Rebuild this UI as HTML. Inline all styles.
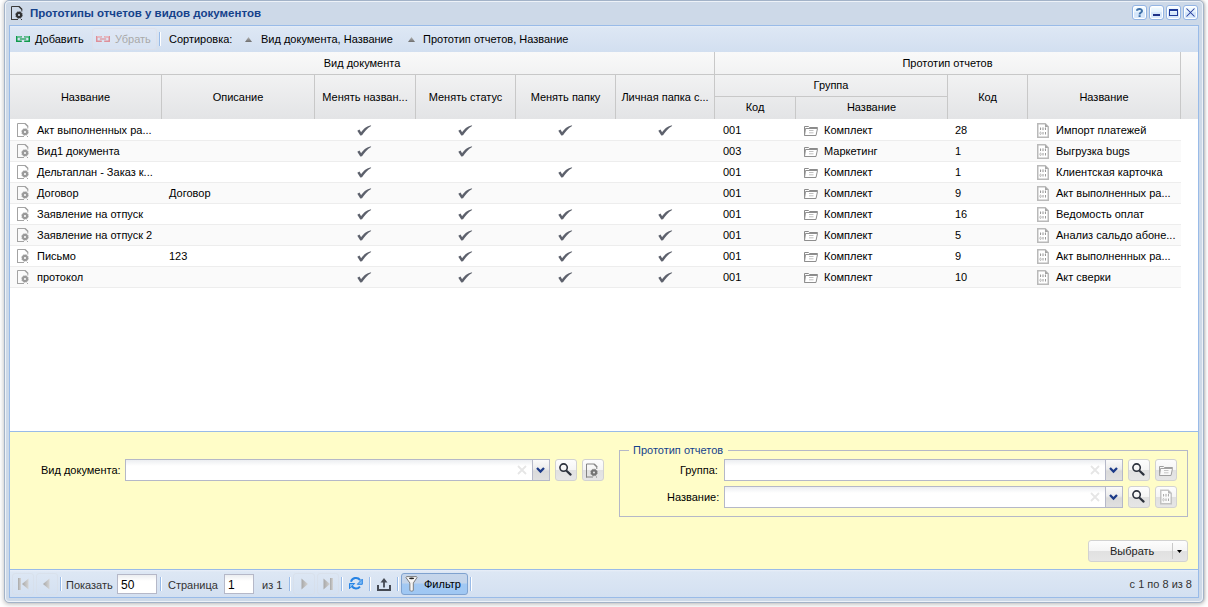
<!DOCTYPE html><html><head><meta charset="utf-8"><style>
*{box-sizing:border-box;margin:0;padding:0}
html,body{width:1208px;height:607px;overflow:hidden;background:#fff;font-family:"Liberation Sans",sans-serif;font-size:11px;color:#000}
.a{position:absolute}
.t{white-space:nowrap;line-height:13px}
.c{text-align:center}
svg{position:absolute;overflow:visible}
</style></head><body>
<div class="a" style="left:4px;top:0px;width:1200px;height:603px;border:1px solid #a3b3c8;border-radius:5px;background:#cdd9e8;box-shadow:0 1px 4px 1px rgba(0,0,0,.2),1px 0 2px rgba(0,0,0,.12)"></div>
<div class="a" style="left:5px;top:1px;width:1198px;height:601px;border:1px solid #edf2f8;border-radius:4px"></div>
<div class="a t" style="left:30px;top:7px;font-weight:bold;font-size:11.5px;color:#15428b">Прототипы отчетов у видов документов</div>
<svg style="left:11px;top:6px;" width="12" height="15" viewBox="0 0 12 15"><path d="M0.5 14V0.5H8.3L10.8 3V5.5M0 13.5H7" fill="none" stroke="#3a3a3a" stroke-width="1"/><path d="M8 0.5L11 3.5" stroke="#3a3a3a" stroke-width="1.4"/><path d="M10 13.5H11" stroke="#3a3a3a" stroke-width="1"/><circle cx="8" cy="9" r="3.4" fill="none" stroke="#303030" stroke-width="0.8" stroke-dasharray="1.6 1.07" opacity=".8"/><circle cx="8" cy="9" r="2.1" fill="none" stroke="#303030" stroke-width="2.1"/></svg>
<div class="a" style="left:1132px;top:5px;width:15px;height:15px;border:1px solid #93b5e4;border-radius:3px;box-shadow:inset 0 0 0 1px #fff;background:linear-gradient(#ffffff 0,#ffffff 1px,#eef9ff 2px,#e6f3fe 45%,#d3e5fa 52%,#dbeafc 100%)"></div>
<svg style="left:1136px;top:8px;" width="7" height="9" viewBox="0 0 7 9"><path d="M1 2.8C1 0.6 6 0.3 6 2.9C6 4.6 3.6 4.6 3.6 6.6" fill="none" stroke="#3f70a8" stroke-width="2"/><rect x="2.6" y="7.2" width="2" height="1.8" fill="#3f70a8"/></svg>
<div class="a" style="left:1149px;top:5px;width:15px;height:15px;border:1px solid #93b5e4;border-radius:3px;box-shadow:inset 0 0 0 1px #fff;background:linear-gradient(#ffffff 0,#ffffff 1px,#eef9ff 2px,#e6f3fe 45%,#d3e5fa 52%,#dbeafc 100%)"></div>
<div class="a" style="left:1153px;top:14px;width:7px;height:2px;background:#1f3288"></div>
<div class="a" style="left:1166px;top:5px;width:15px;height:15px;border:1px solid #93b5e4;border-radius:3px;box-shadow:inset 0 0 0 1px #fff;background:linear-gradient(#ffffff 0,#ffffff 1px,#eef9ff 2px,#e6f3fe 45%,#d3e5fa 52%,#dbeafc 100%)"></div>
<div class="a" style="left:1169px;top:9px;width:9px;height:7px;border:1px solid #1f3a98;border-top-width:2px"></div>
<div class="a" style="left:1183px;top:5px;width:15px;height:15px;border:1px solid #93b5e4;border-radius:3px;box-shadow:inset 0 0 0 1px #fff;background:linear-gradient(#ffffff 0,#ffffff 1px,#eef9ff 2px,#e6f3fe 45%,#d3e5fa 52%,#dbeafc 100%)"></div>
<svg style="left:1186px;top:8px;" width="9" height="9" viewBox="0 0 9 9"><path d="M0.5 0.5L8.5 8.5M8.5 0.5L0.5 8.5" stroke="#23399a" stroke-width="1.05"/></svg>
<div class="a" style="left:9px;top:25px;width:1190px;height:573px;border:1px solid #99bbe8;background:#fff"></div>
<div class="a" style="left:10px;top:26px;width:1188px;height:26px;background:linear-gradient(#e6edf7 0px,#dde7f4 2px,#d2dff0)"></div>
<svg style="left:16px;top:36px;" width="14" height="6" viewBox="0 0 14 6"><path d="M5.8 0.75H0.75V5.25H5.8M8.2 0.75H13.25V5.25H8.2" fill="none" stroke="#109a4c" stroke-width="1.5"/><path d="M1 0.6H5.5M8.5 0.6H13" stroke="#62c08e" stroke-width="1.2"/><path d="M3.8 3H10.2" stroke="#109a4c" stroke-width="1.2"/></svg>
<div class="a t" style="left:35px;top:33px;">Добавить</div>
<div class="a" style="left:92px;top:28px;width:65px;height:22px;border:1px solid rgba(225,220,225,.45);border-radius:3px;background:rgba(230,237,246,.25)"></div>
<svg style="left:96px;top:36px;" width="14" height="6" viewBox="0 0 14 6"><path d="M5.8 0.75H0.75V5.25H5.8M8.2 0.75H13.25V5.25H8.2" fill="none" stroke="#de8f99" stroke-width="1.5"/><path d="M1 0.6H5.5M8.5 0.6H13" stroke="#eab8be" stroke-width="1.2"/><path d="M3.8 3H10.2" stroke="#de8f99" stroke-width="1.2"/></svg>
<div class="a t" style="left:115px;top:33px;color:#a9a9a9">Убрать</div>
<div class="a" style="left:159px;top:32px;width:1px;height:14px;background:#99bbe8"></div>
<div class="a" style="left:160px;top:32px;width:1px;height:14px;background:#fff"></div>
<div class="a t" style="left:169px;top:33px;">Сортировка:</div>
<svg style="left:245px;top:37px;" width="7" height="5" viewBox="0 0 7 5"><defs><linearGradient id="tg" x1="0" y1="0" x2="0" y2="1"><stop offset="0" stop-color="#b4b4b4"/><stop offset="1" stop-color="#6e6e6e"/></linearGradient></defs><path d="M3.5 0L7 5H0Z" fill="url(#tg)"/></svg>
<div class="a t" style="left:261px;top:33px;">Вид документа, Название</div>
<svg style="left:408px;top:37px;" width="7" height="5" viewBox="0 0 7 5"><path d="M3.5 0L7 5H0Z" fill="url(#tg)"/></svg>
<div class="a t" style="left:423px;top:33px;">Прототип отчетов, Название</div>
<div class="a" style="left:10px;top:52px;width:1188px;height:67px;background:linear-gradient(#f9f9f9,#e3e4e6)"></div>
<div class="a" style="left:10px;top:74px;width:1171px;height:1px;background:#c8c8c8"></div>
<div class="a" style="left:715px;top:96px;width:232px;height:1px;background:#c8c8c8"></div>
<div class="a" style="left:161px;top:75px;width:1px;height:44px;background:#c8c8c8"></div>
<div class="a" style="left:314px;top:75px;width:1px;height:44px;background:#c8c8c8"></div>
<div class="a" style="left:415px;top:75px;width:1px;height:44px;background:#c8c8c8"></div>
<div class="a" style="left:515px;top:75px;width:1px;height:44px;background:#c8c8c8"></div>
<div class="a" style="left:615px;top:75px;width:1px;height:44px;background:#c8c8c8"></div>
<div class="a" style="left:947px;top:75px;width:1px;height:44px;background:#c8c8c8"></div>
<div class="a" style="left:1027px;top:75px;width:1px;height:44px;background:#c8c8c8"></div>
<div class="a" style="left:714px;top:52px;width:1px;height:67px;background:#c8c8c8"></div>
<div class="a" style="left:795px;top:97px;width:1px;height:22px;background:#c8c8c8"></div>
<div class="a" style="left:1180px;top:52px;width:1px;height:67px;background:#c8c8c8"></div>
<div class="a t c" style="left:10px;top:57px;width:704px;">Вид документа</div>
<div class="a t c" style="left:715px;top:57px;width:465px;">Прототип отчетов</div>
<div class="a t c" style="left:10px;top:91px;width:151px;">Название</div>
<div class="a t c" style="left:162px;top:91px;width:152px;">Описание</div>
<div class="a t c" style="left:315px;top:91px;width:100px;">Менять назван...</div>
<div class="a t c" style="left:416px;top:91px;width:99px;">Менять статус</div>
<div class="a t c" style="left:516px;top:91px;width:99px;">Менять папку</div>
<div class="a t c" style="left:616px;top:91px;width:98px;">Личная папка с...</div>
<div class="a t c" style="left:948px;top:91px;width:79px;">Код</div>
<div class="a t c" style="left:1028px;top:91px;width:152px;">Название</div>
<div class="a t c" style="left:715px;top:79px;width:232px;">Группа</div>
<div class="a t c" style="left:715px;top:101px;width:80px;">Код</div>
<div class="a t c" style="left:796px;top:101px;width:151px;">Название</div>
<div class="a" style="left:10px;top:119px;width:1171px;height:22px;background:#fff;border-bottom:1px solid #ededed"></div>
<svg style="left:17px;top:123px;" width="12" height="15" viewBox="0 0 12 15"><path d="M0.5 14V0.5H8.3L10.8 3V5.5M0 13.5H7" fill="none" stroke="#a3a3a3" stroke-width="1"/><path d="M8 0.5L11 3.5" stroke="#a3a3a3" stroke-width="1.4"/><path d="M10 13.5H11" stroke="#a3a3a3" stroke-width="1"/><circle cx="8" cy="9" r="3.4" fill="none" stroke="#9a9a9a" stroke-width="0.8" stroke-dasharray="1.6 1.07" opacity=".8"/><circle cx="8" cy="9" r="2.1" fill="none" stroke="#9a9a9a" stroke-width="2.1"/></svg>
<div class="a t" style="left:37px;top:124px;">Акт выполненных ра...</div>
<svg style="left:357px;top:125px;" width="14" height="10" viewBox="0 0 14 10"><path d="M0.3 5.7L2.5 4.6L4.1 7.3C6.4 4.1 9.4 1.1 14.2 0.3L13.8 1.3C10.6 2.9 7.6 6.4 5 10.3L3.3 10.4Z" fill="#5d616c"/></svg>
<svg style="left:458px;top:125px;" width="14" height="10" viewBox="0 0 14 10"><path d="M0.3 5.7L2.5 4.6L4.1 7.3C6.4 4.1 9.4 1.1 14.2 0.3L13.8 1.3C10.6 2.9 7.6 6.4 5 10.3L3.3 10.4Z" fill="#5d616c"/></svg>
<svg style="left:558px;top:125px;" width="14" height="10" viewBox="0 0 14 10"><path d="M0.3 5.7L2.5 4.6L4.1 7.3C6.4 4.1 9.4 1.1 14.2 0.3L13.8 1.3C10.6 2.9 7.6 6.4 5 10.3L3.3 10.4Z" fill="#5d616c"/></svg>
<svg style="left:658px;top:125px;" width="14" height="10" viewBox="0 0 14 10"><path d="M0.3 5.7L2.5 4.6L4.1 7.3C6.4 4.1 9.4 1.1 14.2 0.3L13.8 1.3C10.6 2.9 7.6 6.4 5 10.3L3.3 10.4Z" fill="#5d616c"/></svg>
<div class="a t" style="left:723px;top:124px;">001</div>
<svg style="left:804px;top:126px;" width="14" height="10" viewBox="0 0 14 10"><path d="M0.5 9.5V0.5H4.5L5.5 1.5H13.5V2.5" fill="none" stroke="#8a8a8a" stroke-width="1"/><path d="M0.5 9.5H12L13.5 2.5H1.5Z" fill="#fff" stroke="#8e8e8e" stroke-width="1" stroke-linejoin="round"/><path d="M5 4.5H9.5M5 6.8H9.5" stroke="#c0c0c0" stroke-width="1"/></svg>
<div class="a t" style="left:824px;top:124px;">Комплект</div>
<div class="a t" style="left:955px;top:124px;">28</div>
<svg style="left:1037px;top:123px;" width="12" height="15" viewBox="0 0 12 15"><path d="M0.75 0.75H8.2L11.25 3.8V14.25H0.75Z" fill="#fff" stroke="#b9b9b9" stroke-width="1.5"/><path d="M8 0.75V4H11.25Z" fill="#a5a5a5"/><path d="M3.5 4.5V7M8.5 4.5V7M6 9V11.5M8.5 9V11.5" stroke="#8e8e8e" stroke-width="0.9"/><ellipse cx="6" cy="5.75" rx="0.7" ry="1.25" fill="none" stroke="#a0a0a0" stroke-width="0.7"/><ellipse cx="3.5" cy="10.25" rx="0.7" ry="1.25" fill="none" stroke="#a0a0a0" stroke-width="0.7"/></svg>
<div class="a t" style="left:1056px;top:124px;">Импорт платежей</div>
<div class="a" style="left:10px;top:141px;width:1171px;height:21px;background:#fafafa;border-bottom:1px solid #ededed"></div>
<svg style="left:17px;top:144px;" width="12" height="15" viewBox="0 0 12 15"><path d="M0.5 14V0.5H8.3L10.8 3V5.5M0 13.5H7" fill="none" stroke="#a3a3a3" stroke-width="1"/><path d="M8 0.5L11 3.5" stroke="#a3a3a3" stroke-width="1.4"/><path d="M10 13.5H11" stroke="#a3a3a3" stroke-width="1"/><circle cx="8" cy="9" r="3.4" fill="none" stroke="#9a9a9a" stroke-width="0.8" stroke-dasharray="1.6 1.07" opacity=".8"/><circle cx="8" cy="9" r="2.1" fill="none" stroke="#9a9a9a" stroke-width="2.1"/></svg>
<div class="a t" style="left:37px;top:145px;">Вид1 документа</div>
<svg style="left:357px;top:146px;" width="14" height="10" viewBox="0 0 14 10"><path d="M0.3 5.7L2.5 4.6L4.1 7.3C6.4 4.1 9.4 1.1 14.2 0.3L13.8 1.3C10.6 2.9 7.6 6.4 5 10.3L3.3 10.4Z" fill="#5d616c"/></svg>
<svg style="left:458px;top:146px;" width="14" height="10" viewBox="0 0 14 10"><path d="M0.3 5.7L2.5 4.6L4.1 7.3C6.4 4.1 9.4 1.1 14.2 0.3L13.8 1.3C10.6 2.9 7.6 6.4 5 10.3L3.3 10.4Z" fill="#5d616c"/></svg>
<div class="a t" style="left:723px;top:145px;">003</div>
<svg style="left:804px;top:147px;" width="14" height="10" viewBox="0 0 14 10"><path d="M0.5 9.5V0.5H4.5L5.5 1.5H13.5V2.5" fill="none" stroke="#8a8a8a" stroke-width="1"/><path d="M0.5 9.5H12L13.5 2.5H1.5Z" fill="#fff" stroke="#8e8e8e" stroke-width="1" stroke-linejoin="round"/><path d="M5 4.5H9.5M5 6.8H9.5" stroke="#c0c0c0" stroke-width="1"/></svg>
<div class="a t" style="left:824px;top:145px;">Маркетинг</div>
<div class="a t" style="left:955px;top:145px;">1</div>
<svg style="left:1037px;top:144px;" width="12" height="15" viewBox="0 0 12 15"><path d="M0.75 0.75H8.2L11.25 3.8V14.25H0.75Z" fill="#fff" stroke="#b9b9b9" stroke-width="1.5"/><path d="M8 0.75V4H11.25Z" fill="#a5a5a5"/><path d="M3.5 4.5V7M8.5 4.5V7M6 9V11.5M8.5 9V11.5" stroke="#8e8e8e" stroke-width="0.9"/><ellipse cx="6" cy="5.75" rx="0.7" ry="1.25" fill="none" stroke="#a0a0a0" stroke-width="0.7"/><ellipse cx="3.5" cy="10.25" rx="0.7" ry="1.25" fill="none" stroke="#a0a0a0" stroke-width="0.7"/></svg>
<div class="a t" style="left:1056px;top:145px;">Выгрузка bugs</div>
<div class="a" style="left:10px;top:162px;width:1171px;height:21px;background:#fff;border-bottom:1px solid #ededed"></div>
<svg style="left:17px;top:165px;" width="12" height="15" viewBox="0 0 12 15"><path d="M0.5 14V0.5H8.3L10.8 3V5.5M0 13.5H7" fill="none" stroke="#a3a3a3" stroke-width="1"/><path d="M8 0.5L11 3.5" stroke="#a3a3a3" stroke-width="1.4"/><path d="M10 13.5H11" stroke="#a3a3a3" stroke-width="1"/><circle cx="8" cy="9" r="3.4" fill="none" stroke="#9a9a9a" stroke-width="0.8" stroke-dasharray="1.6 1.07" opacity=".8"/><circle cx="8" cy="9" r="2.1" fill="none" stroke="#9a9a9a" stroke-width="2.1"/></svg>
<div class="a t" style="left:37px;top:166px;">Дельтаплан - Заказ к...</div>
<svg style="left:357px;top:167px;" width="14" height="10" viewBox="0 0 14 10"><path d="M0.3 5.7L2.5 4.6L4.1 7.3C6.4 4.1 9.4 1.1 14.2 0.3L13.8 1.3C10.6 2.9 7.6 6.4 5 10.3L3.3 10.4Z" fill="#5d616c"/></svg>
<svg style="left:558px;top:167px;" width="14" height="10" viewBox="0 0 14 10"><path d="M0.3 5.7L2.5 4.6L4.1 7.3C6.4 4.1 9.4 1.1 14.2 0.3L13.8 1.3C10.6 2.9 7.6 6.4 5 10.3L3.3 10.4Z" fill="#5d616c"/></svg>
<div class="a t" style="left:723px;top:166px;">001</div>
<svg style="left:804px;top:168px;" width="14" height="10" viewBox="0 0 14 10"><path d="M0.5 9.5V0.5H4.5L5.5 1.5H13.5V2.5" fill="none" stroke="#8a8a8a" stroke-width="1"/><path d="M0.5 9.5H12L13.5 2.5H1.5Z" fill="#fff" stroke="#8e8e8e" stroke-width="1" stroke-linejoin="round"/><path d="M5 4.5H9.5M5 6.8H9.5" stroke="#c0c0c0" stroke-width="1"/></svg>
<div class="a t" style="left:824px;top:166px;">Комплект</div>
<div class="a t" style="left:955px;top:166px;">1</div>
<svg style="left:1037px;top:165px;" width="12" height="15" viewBox="0 0 12 15"><path d="M0.75 0.75H8.2L11.25 3.8V14.25H0.75Z" fill="#fff" stroke="#b9b9b9" stroke-width="1.5"/><path d="M8 0.75V4H11.25Z" fill="#a5a5a5"/><path d="M3.5 4.5V7M8.5 4.5V7M6 9V11.5M8.5 9V11.5" stroke="#8e8e8e" stroke-width="0.9"/><ellipse cx="6" cy="5.75" rx="0.7" ry="1.25" fill="none" stroke="#a0a0a0" stroke-width="0.7"/><ellipse cx="3.5" cy="10.25" rx="0.7" ry="1.25" fill="none" stroke="#a0a0a0" stroke-width="0.7"/></svg>
<div class="a t" style="left:1056px;top:166px;">Клиентская карточка</div>
<div class="a" style="left:10px;top:183px;width:1171px;height:21px;background:#fafafa;border-bottom:1px solid #ededed"></div>
<svg style="left:17px;top:186px;" width="12" height="15" viewBox="0 0 12 15"><path d="M0.5 14V0.5H8.3L10.8 3V5.5M0 13.5H7" fill="none" stroke="#a3a3a3" stroke-width="1"/><path d="M8 0.5L11 3.5" stroke="#a3a3a3" stroke-width="1.4"/><path d="M10 13.5H11" stroke="#a3a3a3" stroke-width="1"/><circle cx="8" cy="9" r="3.4" fill="none" stroke="#9a9a9a" stroke-width="0.8" stroke-dasharray="1.6 1.07" opacity=".8"/><circle cx="8" cy="9" r="2.1" fill="none" stroke="#9a9a9a" stroke-width="2.1"/></svg>
<div class="a t" style="left:37px;top:187px;">Договор</div>
<div class="a t" style="left:169px;top:187px;">Договор</div>
<svg style="left:357px;top:188px;" width="14" height="10" viewBox="0 0 14 10"><path d="M0.3 5.7L2.5 4.6L4.1 7.3C6.4 4.1 9.4 1.1 14.2 0.3L13.8 1.3C10.6 2.9 7.6 6.4 5 10.3L3.3 10.4Z" fill="#5d616c"/></svg>
<svg style="left:458px;top:188px;" width="14" height="10" viewBox="0 0 14 10"><path d="M0.3 5.7L2.5 4.6L4.1 7.3C6.4 4.1 9.4 1.1 14.2 0.3L13.8 1.3C10.6 2.9 7.6 6.4 5 10.3L3.3 10.4Z" fill="#5d616c"/></svg>
<div class="a t" style="left:723px;top:187px;">001</div>
<svg style="left:804px;top:189px;" width="14" height="10" viewBox="0 0 14 10"><path d="M0.5 9.5V0.5H4.5L5.5 1.5H13.5V2.5" fill="none" stroke="#8a8a8a" stroke-width="1"/><path d="M0.5 9.5H12L13.5 2.5H1.5Z" fill="#fff" stroke="#8e8e8e" stroke-width="1" stroke-linejoin="round"/><path d="M5 4.5H9.5M5 6.8H9.5" stroke="#c0c0c0" stroke-width="1"/></svg>
<div class="a t" style="left:824px;top:187px;">Комплект</div>
<div class="a t" style="left:955px;top:187px;">9</div>
<svg style="left:1037px;top:186px;" width="12" height="15" viewBox="0 0 12 15"><path d="M0.75 0.75H8.2L11.25 3.8V14.25H0.75Z" fill="#fff" stroke="#b9b9b9" stroke-width="1.5"/><path d="M8 0.75V4H11.25Z" fill="#a5a5a5"/><path d="M3.5 4.5V7M8.5 4.5V7M6 9V11.5M8.5 9V11.5" stroke="#8e8e8e" stroke-width="0.9"/><ellipse cx="6" cy="5.75" rx="0.7" ry="1.25" fill="none" stroke="#a0a0a0" stroke-width="0.7"/><ellipse cx="3.5" cy="10.25" rx="0.7" ry="1.25" fill="none" stroke="#a0a0a0" stroke-width="0.7"/></svg>
<div class="a t" style="left:1056px;top:187px;">Акт выполненных ра...</div>
<div class="a" style="left:10px;top:204px;width:1171px;height:21px;background:#fff;border-bottom:1px solid #ededed"></div>
<svg style="left:17px;top:207px;" width="12" height="15" viewBox="0 0 12 15"><path d="M0.5 14V0.5H8.3L10.8 3V5.5M0 13.5H7" fill="none" stroke="#a3a3a3" stroke-width="1"/><path d="M8 0.5L11 3.5" stroke="#a3a3a3" stroke-width="1.4"/><path d="M10 13.5H11" stroke="#a3a3a3" stroke-width="1"/><circle cx="8" cy="9" r="3.4" fill="none" stroke="#9a9a9a" stroke-width="0.8" stroke-dasharray="1.6 1.07" opacity=".8"/><circle cx="8" cy="9" r="2.1" fill="none" stroke="#9a9a9a" stroke-width="2.1"/></svg>
<div class="a t" style="left:37px;top:208px;">Заявление на отпуск</div>
<svg style="left:357px;top:209px;" width="14" height="10" viewBox="0 0 14 10"><path d="M0.3 5.7L2.5 4.6L4.1 7.3C6.4 4.1 9.4 1.1 14.2 0.3L13.8 1.3C10.6 2.9 7.6 6.4 5 10.3L3.3 10.4Z" fill="#5d616c"/></svg>
<svg style="left:458px;top:209px;" width="14" height="10" viewBox="0 0 14 10"><path d="M0.3 5.7L2.5 4.6L4.1 7.3C6.4 4.1 9.4 1.1 14.2 0.3L13.8 1.3C10.6 2.9 7.6 6.4 5 10.3L3.3 10.4Z" fill="#5d616c"/></svg>
<svg style="left:558px;top:209px;" width="14" height="10" viewBox="0 0 14 10"><path d="M0.3 5.7L2.5 4.6L4.1 7.3C6.4 4.1 9.4 1.1 14.2 0.3L13.8 1.3C10.6 2.9 7.6 6.4 5 10.3L3.3 10.4Z" fill="#5d616c"/></svg>
<svg style="left:658px;top:209px;" width="14" height="10" viewBox="0 0 14 10"><path d="M0.3 5.7L2.5 4.6L4.1 7.3C6.4 4.1 9.4 1.1 14.2 0.3L13.8 1.3C10.6 2.9 7.6 6.4 5 10.3L3.3 10.4Z" fill="#5d616c"/></svg>
<div class="a t" style="left:723px;top:208px;">001</div>
<svg style="left:804px;top:210px;" width="14" height="10" viewBox="0 0 14 10"><path d="M0.5 9.5V0.5H4.5L5.5 1.5H13.5V2.5" fill="none" stroke="#8a8a8a" stroke-width="1"/><path d="M0.5 9.5H12L13.5 2.5H1.5Z" fill="#fff" stroke="#8e8e8e" stroke-width="1" stroke-linejoin="round"/><path d="M5 4.5H9.5M5 6.8H9.5" stroke="#c0c0c0" stroke-width="1"/></svg>
<div class="a t" style="left:824px;top:208px;">Комплект</div>
<div class="a t" style="left:955px;top:208px;">16</div>
<svg style="left:1037px;top:207px;" width="12" height="15" viewBox="0 0 12 15"><path d="M0.75 0.75H8.2L11.25 3.8V14.25H0.75Z" fill="#fff" stroke="#b9b9b9" stroke-width="1.5"/><path d="M8 0.75V4H11.25Z" fill="#a5a5a5"/><path d="M3.5 4.5V7M8.5 4.5V7M6 9V11.5M8.5 9V11.5" stroke="#8e8e8e" stroke-width="0.9"/><ellipse cx="6" cy="5.75" rx="0.7" ry="1.25" fill="none" stroke="#a0a0a0" stroke-width="0.7"/><ellipse cx="3.5" cy="10.25" rx="0.7" ry="1.25" fill="none" stroke="#a0a0a0" stroke-width="0.7"/></svg>
<div class="a t" style="left:1056px;top:208px;">Ведомость оплат</div>
<div class="a" style="left:10px;top:225px;width:1171px;height:21px;background:#fafafa;border-bottom:1px solid #ededed"></div>
<svg style="left:17px;top:228px;" width="12" height="15" viewBox="0 0 12 15"><path d="M0.5 14V0.5H8.3L10.8 3V5.5M0 13.5H7" fill="none" stroke="#a3a3a3" stroke-width="1"/><path d="M8 0.5L11 3.5" stroke="#a3a3a3" stroke-width="1.4"/><path d="M10 13.5H11" stroke="#a3a3a3" stroke-width="1"/><circle cx="8" cy="9" r="3.4" fill="none" stroke="#9a9a9a" stroke-width="0.8" stroke-dasharray="1.6 1.07" opacity=".8"/><circle cx="8" cy="9" r="2.1" fill="none" stroke="#9a9a9a" stroke-width="2.1"/></svg>
<div class="a t" style="left:37px;top:229px;">Заявление на отпуск 2</div>
<svg style="left:357px;top:230px;" width="14" height="10" viewBox="0 0 14 10"><path d="M0.3 5.7L2.5 4.6L4.1 7.3C6.4 4.1 9.4 1.1 14.2 0.3L13.8 1.3C10.6 2.9 7.6 6.4 5 10.3L3.3 10.4Z" fill="#5d616c"/></svg>
<svg style="left:458px;top:230px;" width="14" height="10" viewBox="0 0 14 10"><path d="M0.3 5.7L2.5 4.6L4.1 7.3C6.4 4.1 9.4 1.1 14.2 0.3L13.8 1.3C10.6 2.9 7.6 6.4 5 10.3L3.3 10.4Z" fill="#5d616c"/></svg>
<svg style="left:558px;top:230px;" width="14" height="10" viewBox="0 0 14 10"><path d="M0.3 5.7L2.5 4.6L4.1 7.3C6.4 4.1 9.4 1.1 14.2 0.3L13.8 1.3C10.6 2.9 7.6 6.4 5 10.3L3.3 10.4Z" fill="#5d616c"/></svg>
<svg style="left:658px;top:230px;" width="14" height="10" viewBox="0 0 14 10"><path d="M0.3 5.7L2.5 4.6L4.1 7.3C6.4 4.1 9.4 1.1 14.2 0.3L13.8 1.3C10.6 2.9 7.6 6.4 5 10.3L3.3 10.4Z" fill="#5d616c"/></svg>
<div class="a t" style="left:723px;top:229px;">001</div>
<svg style="left:804px;top:231px;" width="14" height="10" viewBox="0 0 14 10"><path d="M0.5 9.5V0.5H4.5L5.5 1.5H13.5V2.5" fill="none" stroke="#8a8a8a" stroke-width="1"/><path d="M0.5 9.5H12L13.5 2.5H1.5Z" fill="#fff" stroke="#8e8e8e" stroke-width="1" stroke-linejoin="round"/><path d="M5 4.5H9.5M5 6.8H9.5" stroke="#c0c0c0" stroke-width="1"/></svg>
<div class="a t" style="left:824px;top:229px;">Комплект</div>
<div class="a t" style="left:955px;top:229px;">5</div>
<svg style="left:1037px;top:228px;" width="12" height="15" viewBox="0 0 12 15"><path d="M0.75 0.75H8.2L11.25 3.8V14.25H0.75Z" fill="#fff" stroke="#b9b9b9" stroke-width="1.5"/><path d="M8 0.75V4H11.25Z" fill="#a5a5a5"/><path d="M3.5 4.5V7M8.5 4.5V7M6 9V11.5M8.5 9V11.5" stroke="#8e8e8e" stroke-width="0.9"/><ellipse cx="6" cy="5.75" rx="0.7" ry="1.25" fill="none" stroke="#a0a0a0" stroke-width="0.7"/><ellipse cx="3.5" cy="10.25" rx="0.7" ry="1.25" fill="none" stroke="#a0a0a0" stroke-width="0.7"/></svg>
<div class="a t" style="left:1056px;top:229px;">Анализ сальдо абоне...</div>
<div class="a" style="left:10px;top:246px;width:1171px;height:21px;background:#fff;border-bottom:1px solid #ededed"></div>
<svg style="left:17px;top:249px;" width="12" height="15" viewBox="0 0 12 15"><path d="M0.5 14V0.5H8.3L10.8 3V5.5M0 13.5H7" fill="none" stroke="#a3a3a3" stroke-width="1"/><path d="M8 0.5L11 3.5" stroke="#a3a3a3" stroke-width="1.4"/><path d="M10 13.5H11" stroke="#a3a3a3" stroke-width="1"/><circle cx="8" cy="9" r="3.4" fill="none" stroke="#9a9a9a" stroke-width="0.8" stroke-dasharray="1.6 1.07" opacity=".8"/><circle cx="8" cy="9" r="2.1" fill="none" stroke="#9a9a9a" stroke-width="2.1"/></svg>
<div class="a t" style="left:37px;top:250px;">Письмо</div>
<div class="a t" style="left:169px;top:250px;">123</div>
<svg style="left:357px;top:251px;" width="14" height="10" viewBox="0 0 14 10"><path d="M0.3 5.7L2.5 4.6L4.1 7.3C6.4 4.1 9.4 1.1 14.2 0.3L13.8 1.3C10.6 2.9 7.6 6.4 5 10.3L3.3 10.4Z" fill="#5d616c"/></svg>
<svg style="left:458px;top:251px;" width="14" height="10" viewBox="0 0 14 10"><path d="M0.3 5.7L2.5 4.6L4.1 7.3C6.4 4.1 9.4 1.1 14.2 0.3L13.8 1.3C10.6 2.9 7.6 6.4 5 10.3L3.3 10.4Z" fill="#5d616c"/></svg>
<svg style="left:558px;top:251px;" width="14" height="10" viewBox="0 0 14 10"><path d="M0.3 5.7L2.5 4.6L4.1 7.3C6.4 4.1 9.4 1.1 14.2 0.3L13.8 1.3C10.6 2.9 7.6 6.4 5 10.3L3.3 10.4Z" fill="#5d616c"/></svg>
<svg style="left:658px;top:251px;" width="14" height="10" viewBox="0 0 14 10"><path d="M0.3 5.7L2.5 4.6L4.1 7.3C6.4 4.1 9.4 1.1 14.2 0.3L13.8 1.3C10.6 2.9 7.6 6.4 5 10.3L3.3 10.4Z" fill="#5d616c"/></svg>
<div class="a t" style="left:723px;top:250px;">001</div>
<svg style="left:804px;top:252px;" width="14" height="10" viewBox="0 0 14 10"><path d="M0.5 9.5V0.5H4.5L5.5 1.5H13.5V2.5" fill="none" stroke="#8a8a8a" stroke-width="1"/><path d="M0.5 9.5H12L13.5 2.5H1.5Z" fill="#fff" stroke="#8e8e8e" stroke-width="1" stroke-linejoin="round"/><path d="M5 4.5H9.5M5 6.8H9.5" stroke="#c0c0c0" stroke-width="1"/></svg>
<div class="a t" style="left:824px;top:250px;">Комплект</div>
<div class="a t" style="left:955px;top:250px;">9</div>
<svg style="left:1037px;top:249px;" width="12" height="15" viewBox="0 0 12 15"><path d="M0.75 0.75H8.2L11.25 3.8V14.25H0.75Z" fill="#fff" stroke="#b9b9b9" stroke-width="1.5"/><path d="M8 0.75V4H11.25Z" fill="#a5a5a5"/><path d="M3.5 4.5V7M8.5 4.5V7M6 9V11.5M8.5 9V11.5" stroke="#8e8e8e" stroke-width="0.9"/><ellipse cx="6" cy="5.75" rx="0.7" ry="1.25" fill="none" stroke="#a0a0a0" stroke-width="0.7"/><ellipse cx="3.5" cy="10.25" rx="0.7" ry="1.25" fill="none" stroke="#a0a0a0" stroke-width="0.7"/></svg>
<div class="a t" style="left:1056px;top:250px;">Акт выполненных ра...</div>
<div class="a" style="left:10px;top:267px;width:1171px;height:21px;background:#fafafa;border-bottom:1px solid #ededed"></div>
<svg style="left:17px;top:270px;" width="12" height="15" viewBox="0 0 12 15"><path d="M0.5 14V0.5H8.3L10.8 3V5.5M0 13.5H7" fill="none" stroke="#a3a3a3" stroke-width="1"/><path d="M8 0.5L11 3.5" stroke="#a3a3a3" stroke-width="1.4"/><path d="M10 13.5H11" stroke="#a3a3a3" stroke-width="1"/><circle cx="8" cy="9" r="3.4" fill="none" stroke="#9a9a9a" stroke-width="0.8" stroke-dasharray="1.6 1.07" opacity=".8"/><circle cx="8" cy="9" r="2.1" fill="none" stroke="#9a9a9a" stroke-width="2.1"/></svg>
<div class="a t" style="left:37px;top:271px;">протокол</div>
<svg style="left:357px;top:272px;" width="14" height="10" viewBox="0 0 14 10"><path d="M0.3 5.7L2.5 4.6L4.1 7.3C6.4 4.1 9.4 1.1 14.2 0.3L13.8 1.3C10.6 2.9 7.6 6.4 5 10.3L3.3 10.4Z" fill="#5d616c"/></svg>
<svg style="left:458px;top:272px;" width="14" height="10" viewBox="0 0 14 10"><path d="M0.3 5.7L2.5 4.6L4.1 7.3C6.4 4.1 9.4 1.1 14.2 0.3L13.8 1.3C10.6 2.9 7.6 6.4 5 10.3L3.3 10.4Z" fill="#5d616c"/></svg>
<svg style="left:558px;top:272px;" width="14" height="10" viewBox="0 0 14 10"><path d="M0.3 5.7L2.5 4.6L4.1 7.3C6.4 4.1 9.4 1.1 14.2 0.3L13.8 1.3C10.6 2.9 7.6 6.4 5 10.3L3.3 10.4Z" fill="#5d616c"/></svg>
<svg style="left:658px;top:272px;" width="14" height="10" viewBox="0 0 14 10"><path d="M0.3 5.7L2.5 4.6L4.1 7.3C6.4 4.1 9.4 1.1 14.2 0.3L13.8 1.3C10.6 2.9 7.6 6.4 5 10.3L3.3 10.4Z" fill="#5d616c"/></svg>
<div class="a t" style="left:723px;top:271px;">001</div>
<svg style="left:804px;top:273px;" width="14" height="10" viewBox="0 0 14 10"><path d="M0.5 9.5V0.5H4.5L5.5 1.5H13.5V2.5" fill="none" stroke="#8a8a8a" stroke-width="1"/><path d="M0.5 9.5H12L13.5 2.5H1.5Z" fill="#fff" stroke="#8e8e8e" stroke-width="1" stroke-linejoin="round"/><path d="M5 4.5H9.5M5 6.8H9.5" stroke="#c0c0c0" stroke-width="1"/></svg>
<div class="a t" style="left:824px;top:271px;">Комплект</div>
<div class="a t" style="left:955px;top:271px;">10</div>
<svg style="left:1037px;top:270px;" width="12" height="15" viewBox="0 0 12 15"><path d="M0.75 0.75H8.2L11.25 3.8V14.25H0.75Z" fill="#fff" stroke="#b9b9b9" stroke-width="1.5"/><path d="M8 0.75V4H11.25Z" fill="#a5a5a5"/><path d="M3.5 4.5V7M8.5 4.5V7M6 9V11.5M8.5 9V11.5" stroke="#8e8e8e" stroke-width="0.9"/><ellipse cx="6" cy="5.75" rx="0.7" ry="1.25" fill="none" stroke="#a0a0a0" stroke-width="0.7"/><ellipse cx="3.5" cy="10.25" rx="0.7" ry="1.25" fill="none" stroke="#a0a0a0" stroke-width="0.7"/></svg>
<div class="a t" style="left:1056px;top:271px;">Акт сверки</div>
<div class="a" style="left:10px;top:431px;width:1188px;height:139px;background:#fffdc8;border-top:1px solid #99bbe8;border-bottom:1px solid #99bbe8"></div>
<div class="a t" style="left:41px;top:464px;">Вид документа:</div>
<div class="a" style="left:125px;top:459px;width:425px;height:22px;border:1px solid #b5b8c8;background:linear-gradient(#eceef1 0px,#fff 6px)"></div>
<svg style="left:517px;top:465px;" width="10" height="10" viewBox="0 0 10 10"><path d="M1 1L9 9M9 1L1 9" stroke="#e6e6e6" stroke-width="1.8"/></svg>
<div class="a" style="left:532px;top:459px;width:18px;height:22px;border:1px solid #b5b8c8;background:linear-gradient(#fafafa,#ececec 45%,#dadada 55%,#e0e0e0)"></div>
<svg style="left:536px;top:467px;" width="9" height="6" viewBox="0 0 9 6"><path d="M1 1L4.5 4.5L8 1" fill="none" stroke="#1d3b88" stroke-width="2.3"/></svg>
<div class="a" style="left:555px;top:459px;width:22px;height:22px;border:1px solid #d2d2d2;border-radius:3px;background:linear-gradient(#fdfdfd,#f5f5f5 48%,#e1e1e1 52%,#e6e6e6)"></div>
<svg style="left:559px;top:463px;" width="14" height="14" viewBox="0 0 14 14"><circle cx="4.6" cy="4.6" r="3.7" fill="none" stroke="#2c313c" stroke-width="1.6"/><path d="M8 8.2L11.6 11.6" stroke="#2c313c" stroke-width="2.2" stroke-linecap="round"/></svg>
<div class="a" style="left:582px;top:459px;width:22px;height:22px;border:1px solid #d2d2d2;border-radius:3px;background:linear-gradient(#fdfdfd,#f5f5f5 48%,#e1e1e1 52%,#e6e6e6)"></div>
<svg style="left:586px;top:463px;opacity:.8;" width="14" height="14" viewBox="0 0 14 14"><g transform="translate(0,0.5)"><path d="M0.5 14V0.5H8.3L10.8 3V5.5M0 13.5H7" fill="none" stroke="#6a6a6a" stroke-width="1"/><path d="M8 0.5L11 3.5" stroke="#6a6a6a" stroke-width="1.4"/><path d="M10 13.5H11" stroke="#6a6a6a" stroke-width="1"/><circle cx="8" cy="9" r="3.4" fill="none" stroke="#5a5a5a" stroke-width="0.8" stroke-dasharray="1.6 1.07" opacity=".8"/><circle cx="8" cy="9" r="2.1" fill="none" stroke="#5a5a5a" stroke-width="2.1"/></g></svg>
<div class="a" style="left:619px;top:450px;width:569px;height:67px;border:1px solid #b5b8c8"></div>
<div class="a" style="left:629px;top:444px;width:99px;height:12px;background:#fffdc8"></div>
<div class="a t" style="left:633px;top:444px;color:#15428b">Прототип отчетов</div>
<div class="a t" style="left:680px;top:464px;">Группа:</div>
<div class="a" style="left:724px;top:459px;width:399px;height:22px;border:1px solid #b5b8c8;background:linear-gradient(#eceef1 0px,#fff 6px)"></div>
<svg style="left:1090px;top:465px;" width="10" height="10" viewBox="0 0 10 10"><path d="M1 1L9 9M9 1L1 9" stroke="#e6e6e6" stroke-width="1.8"/></svg>
<div class="a" style="left:1105px;top:459px;width:18px;height:22px;border:1px solid #b5b8c8;background:linear-gradient(#fafafa,#ececec 45%,#dadada 55%,#e0e0e0)"></div>
<svg style="left:1109px;top:467px;" width="9" height="6" viewBox="0 0 9 6"><path d="M1 1L4.5 4.5L8 1" fill="none" stroke="#1d3b88" stroke-width="2.3"/></svg>
<div class="a" style="left:1128px;top:459px;width:22px;height:22px;border:1px solid #d2d2d2;border-radius:3px;background:linear-gradient(#fdfdfd,#f5f5f5 48%,#e1e1e1 52%,#e6e6e6)"></div>
<svg style="left:1132px;top:463px;" width="14" height="14" viewBox="0 0 14 14"><circle cx="4.6" cy="4.6" r="3.7" fill="none" stroke="#2c313c" stroke-width="1.6"/><path d="M8 8.2L11.6 11.6" stroke="#2c313c" stroke-width="2.2" stroke-linecap="round"/></svg>
<div class="a" style="left:1155px;top:459px;width:22px;height:22px;border:1px solid #d2d2d2;border-radius:3px;background:linear-gradient(#fdfdfd,#f5f5f5 48%,#e1e1e1 52%,#e6e6e6)"></div>
<svg style="left:1159px;top:463px;opacity:.8;" width="14" height="14" viewBox="0 0 14 14"><g transform="translate(0,3)"><path d="M0.5 9.5V0.5H4.5L5.5 1.5H13.5V2.5" fill="none" stroke="#8a8a8a" stroke-width="1"/><path d="M0.5 9.5H12L13.5 2.5H1.5Z" fill="#fff" stroke="#8e8e8e" stroke-width="1" stroke-linejoin="round"/><path d="M5 4.5H9.5M5 6.8H9.5" stroke="#c0c0c0" stroke-width="1"/></g></svg>
<div class="a t" style="left:667px;top:491px;">Название:</div>
<div class="a" style="left:724px;top:486px;width:399px;height:22px;border:1px solid #b5b8c8;background:linear-gradient(#eceef1 0px,#fff 6px)"></div>
<svg style="left:1090px;top:492px;" width="10" height="10" viewBox="0 0 10 10"><path d="M1 1L9 9M9 1L1 9" stroke="#e6e6e6" stroke-width="1.8"/></svg>
<div class="a" style="left:1105px;top:486px;width:18px;height:22px;border:1px solid #b5b8c8;background:linear-gradient(#fafafa,#ececec 45%,#dadada 55%,#e0e0e0)"></div>
<svg style="left:1109px;top:494px;" width="9" height="6" viewBox="0 0 9 6"><path d="M1 1L4.5 4.5L8 1" fill="none" stroke="#1d3b88" stroke-width="2.3"/></svg>
<div class="a" style="left:1128px;top:486px;width:22px;height:22px;border:1px solid #d2d2d2;border-radius:3px;background:linear-gradient(#fdfdfd,#f5f5f5 48%,#e1e1e1 52%,#e6e6e6)"></div>
<svg style="left:1132px;top:490px;" width="14" height="14" viewBox="0 0 14 14"><circle cx="4.6" cy="4.6" r="3.7" fill="none" stroke="#2c313c" stroke-width="1.6"/><path d="M8 8.2L11.6 11.6" stroke="#2c313c" stroke-width="2.2" stroke-linecap="round"/></svg>
<div class="a" style="left:1155px;top:486px;width:22px;height:22px;border:1px solid #d2d2d2;border-radius:3px;background:linear-gradient(#fdfdfd,#f5f5f5 48%,#e1e1e1 52%,#e6e6e6)"></div>
<svg style="left:1159px;top:490px;opacity:.8;" width="14" height="14" viewBox="0 0 14 14"><g transform="translate(1,-0.5)"><path d="M0.75 0.75H8.2L11.25 3.8V14.25H0.75Z" fill="#fff" stroke="#b9b9b9" stroke-width="1.5"/><path d="M8 0.75V4H11.25Z" fill="#a5a5a5"/><path d="M3.5 4.5V7M8.5 4.5V7M6 9V11.5M8.5 9V11.5" stroke="#8e8e8e" stroke-width="0.9"/><ellipse cx="6" cy="5.75" rx="0.7" ry="1.25" fill="none" stroke="#a0a0a0" stroke-width="0.7"/><ellipse cx="3.5" cy="10.25" rx="0.7" ry="1.25" fill="none" stroke="#a0a0a0" stroke-width="0.7"/></g></svg>
<div class="a" style="left:1088px;top:540px;width:100px;height:22px;border:1px solid #d2d2d2;border-radius:3px;background:linear-gradient(#fdfdfd,#f5f5f5 48%,#e1e1e1 52%,#e6e6e6)"></div>
<div class="a t" style="left:1110px;top:545px;color:#222">Выбрать</div>
<div class="a" style="left:1172px;top:543px;width:1px;height:16px;background:#c8c8c8"></div>
<svg style="left:1177px;top:550px;" width="5" height="3" viewBox="0 0 5 3"><path d="M0 0H5L2.5 3Z" fill="#000"/></svg>
<div class="a" style="left:10px;top:570px;width:1188px;height:27px;background:linear-gradient(#e8eef8 0px,#dde7f4 2px,#d3e0f1)"></div>
<div class="a" style="left:12px;top:573px;width:22px;height:22px;border:1px solid rgba(215,222,232,.7);border-radius:3px"></div>
<div class="a" style="left:36px;top:573px;width:22px;height:22px;border:1px solid rgba(215,222,232,.7);border-radius:3px"></div>
<svg style="left:18px;top:578px;" width="11" height="12" viewBox="0 0 11 12"><defs><linearGradient id="g1" x1="0" x2="1"><stop offset="0" stop-color="#a8a8a8"/><stop offset="1" stop-color="#d4d4d4"/></linearGradient></defs><rect x="0" y="0" width="3" height="12" fill="url(#g1)"/><path d="M10.5 0.5L4 6L10.5 11.5Z" fill="url(#g1)"/></svg>
<svg style="left:43px;top:578px;" width="7" height="12" viewBox="0 0 7 12"><path d="M6.5 0.5L0 6L6.5 11.5Z" fill="url(#g1)"/></svg>
<div class="a" style="left:60px;top:577px;width:1px;height:14px;background:#99bbe8"></div>
<div class="a" style="left:61px;top:577px;width:1px;height:14px;background:#fff"></div>
<div class="a t" style="left:66px;top:579px;color:#333">Показать</div>
<div class="a" style="left:117px;top:574px;width:40px;height:20px;border:1px solid #b5b8c8;background:linear-gradient(#eceef1 0px,#fff 6px)"></div>
<div class="a t" style="left:121px;top:579px;font-size:12px">50</div>
<div class="a" style="left:160px;top:577px;width:1px;height:14px;background:#99bbe8"></div>
<div class="a" style="left:161px;top:577px;width:1px;height:14px;background:#fff"></div>
<div class="a t" style="left:168px;top:579px;color:#333">Страница</div>
<div class="a" style="left:224px;top:574px;width:30px;height:20px;border:1px solid #b5b8c8;background:linear-gradient(#eceef1 0px,#fff 6px)"></div>
<div class="a t" style="left:228px;top:579px;font-size:12px">1</div>
<div class="a t" style="left:262px;top:579px;color:#333">из 1</div>
<div class="a" style="left:289px;top:577px;width:1px;height:14px;background:#99bbe8"></div>
<div class="a" style="left:290px;top:577px;width:1px;height:14px;background:#fff"></div>
<div class="a" style="left:293px;top:573px;width:22px;height:22px;border:1px solid rgba(215,222,232,.7);border-radius:3px"></div>
<div class="a" style="left:317px;top:573px;width:22px;height:22px;border:1px solid rgba(215,222,232,.7);border-radius:3px"></div>
<svg style="left:301px;top:578px;" width="7" height="12" viewBox="0 0 7 12"><path d="M0.5 0.5L7 6L0.5 11.5Z" fill="url(#g1)"/></svg>
<svg style="left:323px;top:578px;" width="11" height="12" viewBox="0 0 11 12"><path d="M0.5 0.5L7 6L0.5 11.5Z" fill="url(#g1)"/><rect x="7" y="0" width="3" height="12" fill="url(#g1)"/></svg>
<div class="a" style="left:341px;top:577px;width:1px;height:14px;background:#99bbe8"></div>
<div class="a" style="left:342px;top:577px;width:1px;height:14px;background:#fff"></div>
<svg style="left:346px;top:574px;" width="20" height="20" viewBox="0 0 20 20"><path d="M4.98 7.85A5.2 5.2 0 0 1 14.12 6.03" fill="none" stroke="#2683e4" stroke-width="2"/><path d="M11.3 10.3H16.3V5.1Z" fill="#7fbcf5" stroke="#2683e4" stroke-width="1" stroke-linejoin="round"/><path d="M13.98 12.54A5.2 5.2 0 0 1 5.74 12.18" fill="none" stroke="#2683e4" stroke-width="2"/><path d="M8.7 9.5H3.5V14.7Z" fill="#7fbcf5" stroke="#2683e4" stroke-width="1" stroke-linejoin="round"/></svg>
<div class="a" style="left:369px;top:577px;width:1px;height:14px;background:#99bbe8"></div>
<div class="a" style="left:370px;top:577px;width:1px;height:14px;background:#fff"></div>
<svg style="left:377px;top:578px;" width="14" height="13" viewBox="0 0 14 13"><path d="M1 7V12H13V7" fill="none" stroke="#454a54" stroke-width="2"/><path d="M7 9.5V3" stroke="#454a54" stroke-width="1.8"/><path d="M3.5 4.5L7 0L10.5 4.5Z" fill="#454a54"/></svg>
<div class="a" style="left:397px;top:577px;width:1px;height:14px;background:#99bbe8"></div>
<div class="a" style="left:398px;top:577px;width:1px;height:14px;background:#fff"></div>
<div class="a" style="left:401px;top:573px;width:67px;height:22px;border:1px solid #7fa2cf;border-radius:3px;background:linear-gradient(#c6d6eb 0,#c3d4ea 47%,#a3c9f3 48%,#9fc7f3 100%)"></div>
<svg style="left:405px;top:576px;" width="13" height="16" viewBox="0 0 13 16"><path d="M1.5 0.6H11.5L12 1.6L8.3 7V14.3C8.3 15.4 4.9 15.4 4.9 14.3V7L1 1.6Z" fill="#f7f7f7" stroke="#6f6f6f" stroke-width="0.9" stroke-linejoin="round"/><ellipse cx="6.6" cy="2.4" rx="2.6" ry="0.8" fill="#222"/><path d="M4.9 7H8.3" stroke="#ddd" stroke-width="0.6"/></svg>
<div class="a t" style="left:424px;top:578px;">Фильтр</div>
<div class="a" style="left:470px;top:577px;width:1px;height:14px;background:#99bbe8"></div>
<div class="a" style="left:471px;top:577px;width:1px;height:14px;background:#fff"></div>
<div class="a t" style="right:16px;top:578px;text-align:right;color:#333">с 1 по 8 из 8</div>
</body></html>
